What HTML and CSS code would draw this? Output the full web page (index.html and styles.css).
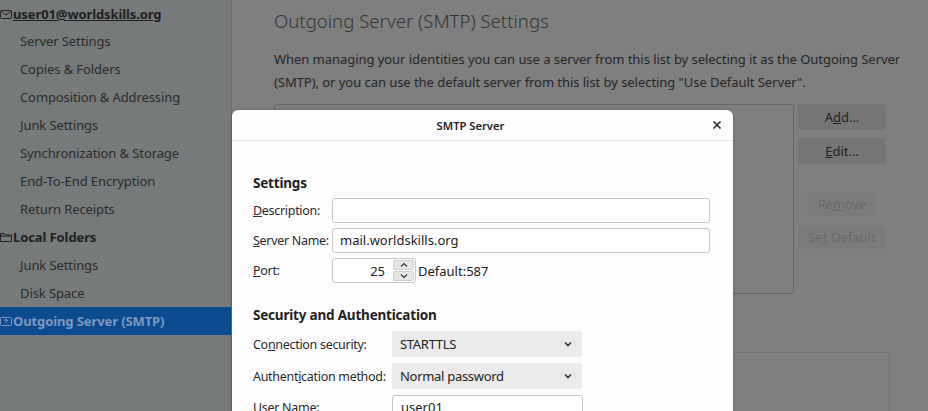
FILE: index.html
```html
<!DOCTYPE html>
<html>
<head>
<meta charset="utf-8">
<link rel="stylesheet" href="styles.css">
</head>
<body>
<div class="app">
  <nav class="sidebar">
    <div class="row head focused"><svg class="ico" viewBox="0 0 12 12"><rect x="0.5" y="2.5" width="11" height="8" rx="1" fill="none" stroke="currentColor"/><path d="M1 3l5 4 5-4" fill="none" stroke="currentColor"/></svg><span>user01@worldskills.org</span></div>
    <div class="row">Server Settings</div>
    <div class="row">Copies &amp; Folders</div>
    <div class="row">Composition &amp; Addressing</div>
    <div class="row">Junk Settings</div>
    <div class="row">Synchronization &amp; Storage</div>
    <div class="row">End-To-End Encryption</div>
    <div class="row">Return Receipts</div>
    <div class="row head"><svg class="ico" viewBox="0 0 12 12"><path d="M0.5 2.5h4l1 1.5h6v6.5h-11z" fill="none" stroke="currentColor"/><path d="M0.5 5h11" stroke="currentColor"/></svg><span>Local Folders</span></div>
    <div class="row">Junk Settings</div>
    <div class="row">Disk Space</div>
    <div class="row head selected"><svg class="ico" viewBox="0 0 12 12"><rect x="0.5" y="2.5" width="11" height="8" rx="1" fill="none" stroke="currentColor"/><path d="M6 8.5V4M4 6l2-2 2 2" fill="none" stroke="currentColor"/></svg><span>Outgoing Server (SMTP)</span></div>
  </nav>
  <main class="main">
    <h1 class="title">Outgoing Server (SMTP) Settings</h1>
    <p class="desc">When managing your identities you can use a server from this list by selecting it as the Outgoing Server (SMTP), or you can use the default server from this list by selecting "Use Default Server".</p>
    <div class="servers">
      <div class="list"></div>
      <div class="buttons">
        <div class="btn">A<u>d</u>d…</div>
        <div class="btn"><u>E</u>dit…</div>
        <div class="spacer"></div>
        <div class="btn disabled">Re<u>m</u>ove</div>
        <div class="btn disabled setdef">Se<u>t</u> Default</div>
      </div>
    </div>
    <div class="details"></div>
  </main>
</div>

<div class="dialog">
  <div class="dlg-head">
    <span class="dlg-title">SMTP Server</span>
    <svg class="close" viewBox="0 0 10 10"><path d="M1.5 1.5l7 7M8.5 1.5l-7 7" stroke="currentColor" stroke-width="1.5"/></svg>
  </div>
  <div class="dlg-body">
    <h2 class="sect">Settings</h2>
    <div class="grid1">
      <label><u>D</u>escription:</label>
      <div class="input"></div>
      <label><u>S</u>erver Name:</label>
      <div class="input">mail.worldskills.org</div>
      <label><u>P</u>ort:</label>
      <div class="portline">
        <div class="port"><span class="num">25</span><span class="spin"><span class="arrow"><svg viewBox="0 0 10 8"><path d="M2 5.5l3-3 3 3" fill="none" stroke="currentColor" stroke-width="1.1"/></svg></span><span class="arrow"><svg viewBox="0 0 10 8"><path d="M2 2.5l3 3 3-3" fill="none" stroke="currentColor" stroke-width="1.1"/></svg></span></span></div>
        <span class="dflt">Default:587</span>
      </div>
    </div>
    <h2 class="sect sect2">Security and Authentication</h2>
    <div class="grid2">
      <label>Co<u>n</u>nection security:</label>
      <div class="select"><span>STARTTLS</span><svg viewBox="0 0 10 10"><path d="M2 3.5l3 3 3-3" fill="none" stroke="currentColor" stroke-width="1.4"/></svg></div>
      <label>Authent<u>i</u>cation method:</label>
      <div class="select"><span>Normal password</span><svg viewBox="0 0 10 10"><path d="M2 3.5l3 3 3-3" fill="none" stroke="currentColor" stroke-width="1.4"/></svg></div>
      <label>User Name:</label>
      <div class="input small">user01</div>
    </div>
  </div>
</div>
</body>
</html>
```
FILE: styles.css
```css
html, body {
  margin: 0;
  padding: 0;
}
body {
  width: 928px;
  height: 411px;
  overflow: hidden;
  font-family: "Noto Sans", "DejaVu Sans", sans-serif;
  font-size: 13px;
  color: #262727;
  position: relative;
}
.app {
  display: flex;
  height: 411px;
}
.sidebar {
  width: 231px;
  flex: none;
  background: #777a7a;
  border-right: 1px solid #6c6e6e;
}
.row {
  height: 28px;
  line-height: 28px;
  padding-left: 20px;
  white-space: nowrap;
  color: #2a2b2b;
  letter-spacing: -0.1px;
}
.row:first-child {
  height: 27px;
}
.row.head {
  padding-left: 0;
  font-weight: 700;
  display: flex;
  align-items: center;
  gap: 1px;
  color: #1e1f1f;
}
.ico {
  width: 12px;
  height: 12px;
  flex: none;
}
.focused span {
  text-decoration: underline;
}
.row.selected {
  background: #0b4a8e;
  color: #7f99c0;
}
.main {
  flex: 1;
  background: #7f7f7f;
  padding-left: 42px;
}
.title {
  margin: 9px 0 0;
  font-size: 18.6px;
  font-weight: 300;
  line-height: 24px;
  color: #333;
}
.desc {
  margin: 15px 0 0;
  width: 645px;
  line-height: 23px;
  color: #262626;
  letter-spacing: -0.05px;
}
.servers {
  display: flex;
  margin-top: 10px;
}
.list {
  width: 518px;
  height: 188px;
  border: 1px solid #666;
  border-radius: 3px;
}
.buttons {
  margin-left: 4px;
  display: flex;
  flex-direction: column;
  gap: 8px;
  padding-top: 0;
}
.btn {
  width: 88px;
  height: 26px;
  line-height: 26px;
  text-align: center;
  background: #757575;
  border-radius: 3px;
  color: #222;
}
.btn.disabled {
  width: auto;
  align-self: center;
  padding: 0 10px;
  background: #7b7b7b;
  color: #686868;
  height: 23px;
  line-height: 23px;
}
.btn.setdef {
  margin-top: 2px;
}
.spacer {
  height: 13px;
}
.details {
  margin-top: 58px;
  width: 614px;
  height: 80px;
  border: 1px solid #737373;
  border-bottom: none;
}

.dialog {
  position: absolute;
  left: 232px;
  top: 110px;
  width: 501px;
  height: 320px;
  background: #fdfdfd;
  border-radius: 6px 6px 0 0;
  box-shadow: 0 0 3px rgba(0,0,0,0.3);
  color: #2b2b2b;
}
.dlg-head {
  height: 30px;
  border-bottom: 1px solid #e4e4e4;
  display: flex;
  align-items: center;
  justify-content: center;
  padding-right: 24px;
  position: relative;
}
.dlg-title {
  font-size: 11.2px;
  font-weight: 600;
  color: #222;
}
.close {
  position: absolute;
  right: 11px;
  top: 10px;
  width: 10px;
  height: 10px;
  color: #222;
}
.dlg-body {
  padding: 0 21px;
}
.sect {
  margin: 32px 0 0;
  font-size: 13.5px;
  font-weight: 700;
  line-height: 20px;
  color: #1e1e1e;
  letter-spacing: -0.2px;
}
.sect2 {
  margin-top: 22px;
}
label {
  font-size: 12.5px;
  letter-spacing: -0.3px;
  white-space: nowrap;
  color: #2b2b2b;
}
.grid1 {
  display: grid;
  grid-template-columns: 79px 378px;
  row-gap: 5px;
  margin-top: 5px;
  align-items: center;
}
.input {
  height: 23px;
  border: 1px solid #c8c8c8;
  border-radius: 3px;
  background: #fff;
  line-height: 23px;
  padding-left: 7px;
  color: #222;
}
.portline {
  display: flex;
  align-items: center;
  gap: 2px;
}
.port {
  width: 82px;
  height: 23px;
  border: 1px solid #c8c8c8;
  border-radius: 3px;
  background: #fff;
  display: flex;
  justify-content: flex-end;
  align-items: center;
}
.num {
  padding-right: 8px;
  color: #222;
}
.spin {
  width: 21px;
  height: 21px;
  margin-right: 1px;
  display: flex;
  flex-direction: column;
  gap: 1px;
}
.arrow {
  flex: 1;
  background: #e6e6e6;
  border: 1px solid #cfcfcf;
  border-radius: 2px;
  display: flex;
  align-items: center;
  justify-content: center;
}
.arrow svg {
  width: 10px;
  height: 8px;
  color: #333;
}
.dflt {
  color: #222;
}
.grid2 {
  display: grid;
  grid-template-columns: 139px 190px;
  row-gap: 6px;
  margin-top: 6px;
  align-items: center;
}
.select {
  height: 26px;
  background: #ebebeb;
  border-radius: 3px;
  display: flex;
  align-items: center;
  justify-content: space-between;
  padding: 0 9px 0 8px;
  color: #222;
  letter-spacing: -0.3px;
}
.select svg {
  width: 10px;
  height: 10px;
}
.input.small {
  width: 181px;
  padding-left: 8px;
}
```
